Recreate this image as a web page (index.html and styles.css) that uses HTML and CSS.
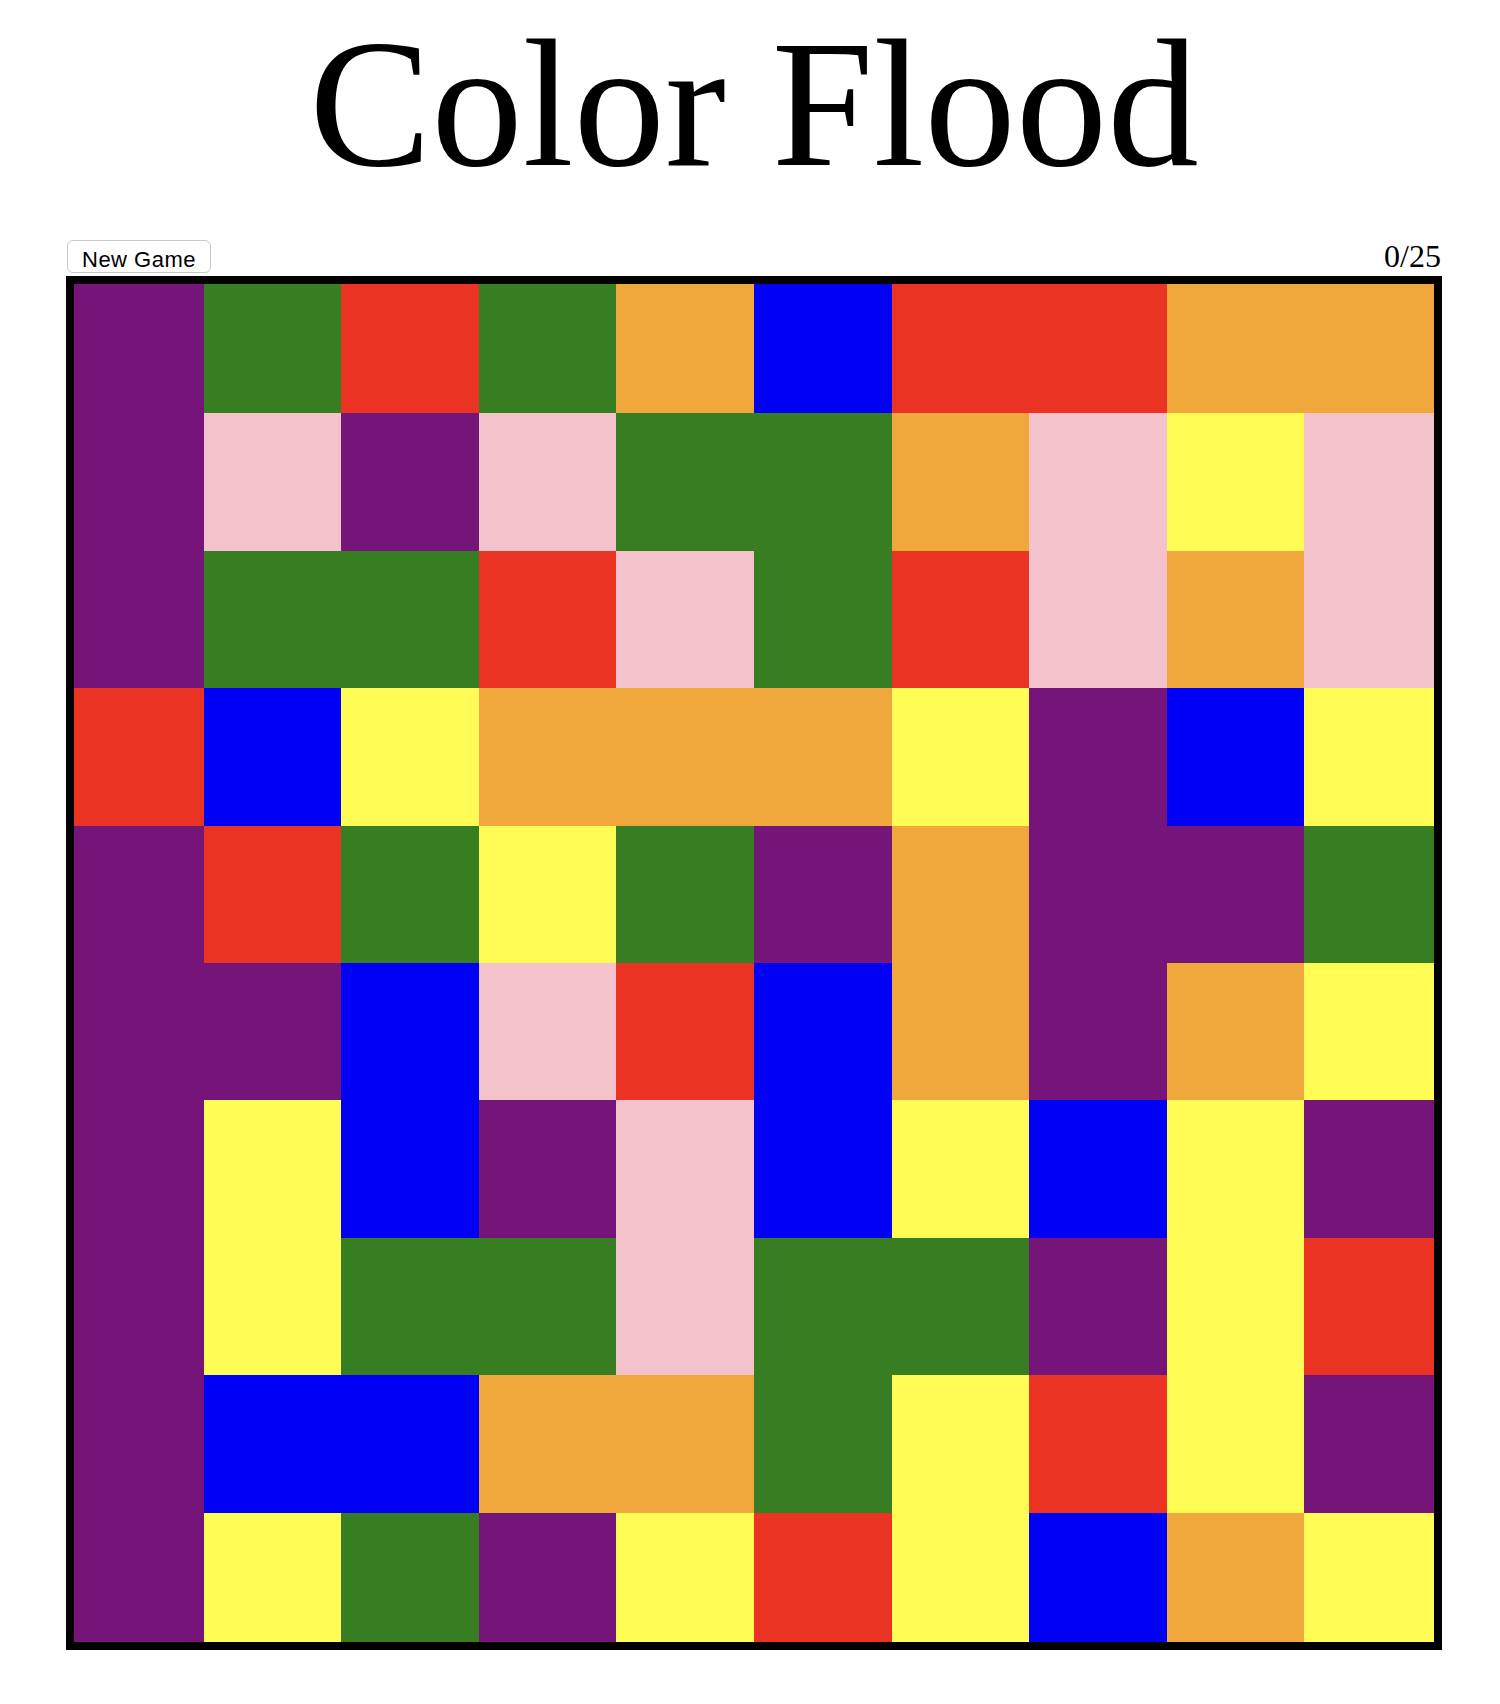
FILE: index.html
```html
<!DOCTYPE html>
<html lang="en">
<head>
<meta charset="utf-8">
<title>Color Flood</title>
<link rel="stylesheet" href="styles.css">
</head>
<body>
<main class="app">
  <h1 class="title">Color Flood</h1>
  <div class="toolbar">
    <button class="new-game" type="button">New Game</button>
    <span class="counter">0/25</span>
  </div>
  <div class="board">
    <div class="cell p"></div><div class="cell g"></div><div class="cell r"></div><div class="cell g"></div><div class="cell o"></div><div class="cell b"></div><div class="cell r"></div><div class="cell r"></div><div class="cell o"></div><div class="cell o"></div>
    <div class="cell p"></div><div class="cell k"></div><div class="cell p"></div><div class="cell k"></div><div class="cell g"></div><div class="cell g"></div><div class="cell o"></div><div class="cell k"></div><div class="cell y"></div><div class="cell k"></div>
    <div class="cell p"></div><div class="cell g"></div><div class="cell g"></div><div class="cell r"></div><div class="cell k"></div><div class="cell g"></div><div class="cell r"></div><div class="cell k"></div><div class="cell o"></div><div class="cell k"></div>
    <div class="cell r"></div><div class="cell b"></div><div class="cell y"></div><div class="cell o"></div><div class="cell o"></div><div class="cell o"></div><div class="cell y"></div><div class="cell p"></div><div class="cell b"></div><div class="cell y"></div>
    <div class="cell p"></div><div class="cell r"></div><div class="cell g"></div><div class="cell y"></div><div class="cell g"></div><div class="cell p"></div><div class="cell o"></div><div class="cell p"></div><div class="cell p"></div><div class="cell g"></div>
    <div class="cell p"></div><div class="cell p"></div><div class="cell b"></div><div class="cell k"></div><div class="cell r"></div><div class="cell b"></div><div class="cell o"></div><div class="cell p"></div><div class="cell o"></div><div class="cell y"></div>
    <div class="cell p"></div><div class="cell y"></div><div class="cell b"></div><div class="cell p"></div><div class="cell k"></div><div class="cell b"></div><div class="cell y"></div><div class="cell b"></div><div class="cell y"></div><div class="cell p"></div>
    <div class="cell p"></div><div class="cell y"></div><div class="cell g"></div><div class="cell g"></div><div class="cell k"></div><div class="cell g"></div><div class="cell g"></div><div class="cell p"></div><div class="cell y"></div><div class="cell r"></div>
    <div class="cell p"></div><div class="cell b"></div><div class="cell b"></div><div class="cell o"></div><div class="cell o"></div><div class="cell g"></div><div class="cell y"></div><div class="cell r"></div><div class="cell y"></div><div class="cell p"></div>
    <div class="cell p"></div><div class="cell y"></div><div class="cell g"></div><div class="cell p"></div><div class="cell y"></div><div class="cell r"></div><div class="cell y"></div><div class="cell b"></div><div class="cell o"></div><div class="cell y"></div>
  </div>
</main>
</body>
</html>
```
FILE: styles.css
```css
html, body {
  margin: 0;
  padding: 0;
  background: #fff;
}

body {
  font-family: "Liberation Serif", "Times New Roman", serif;
  color: #000;
}

.app {
  width: 1376px;
  margin-left: 66px;
}

.title {
  margin: 0;
  padding-top: 4px;
  font-size: 183px;
  font-weight: normal;
  line-height: 200px;
  text-align: center;
}

.toolbar {
  display: flex;
  justify-content: space-between;
  align-items: baseline;
  margin-top: 36px;
  margin-bottom: 3px;
}

.new-game {
  margin-left: 1px;
  padding: 6px 14px 0;
  height: 33px;
  font-family: "Liberation Sans", Arial, sans-serif;
  font-size: 22px;
  letter-spacing: 0.5px;
  line-height: 25px;
  color: #000;
  background: #fff;
  border: 1px solid #c9c9c9;
  border-radius: 6px;
}

.counter {
  font-size: 32px;
  line-height: 1;
  padding-right: 1px;
}

.board {
  position: relative;
  width: 1376px;
  height: 1374px;
  display: grid;
  grid-template-columns: repeat(10, 1fr);
  grid-template-rows: repeat(10, 1fr);
}

.board::after {
  content: "";
  position: absolute;
  inset: 0;
  border: 8px solid #000;
  pointer-events: none;
}

.p { background: #75157a; }
.g { background: #377d22; }
.r { background: #ea3323; }
.b { background: #0000f5; }
.y { background: #fffd55; }
.o { background: #f0a83c; }
.k { background: #f4c2ca; }
```
